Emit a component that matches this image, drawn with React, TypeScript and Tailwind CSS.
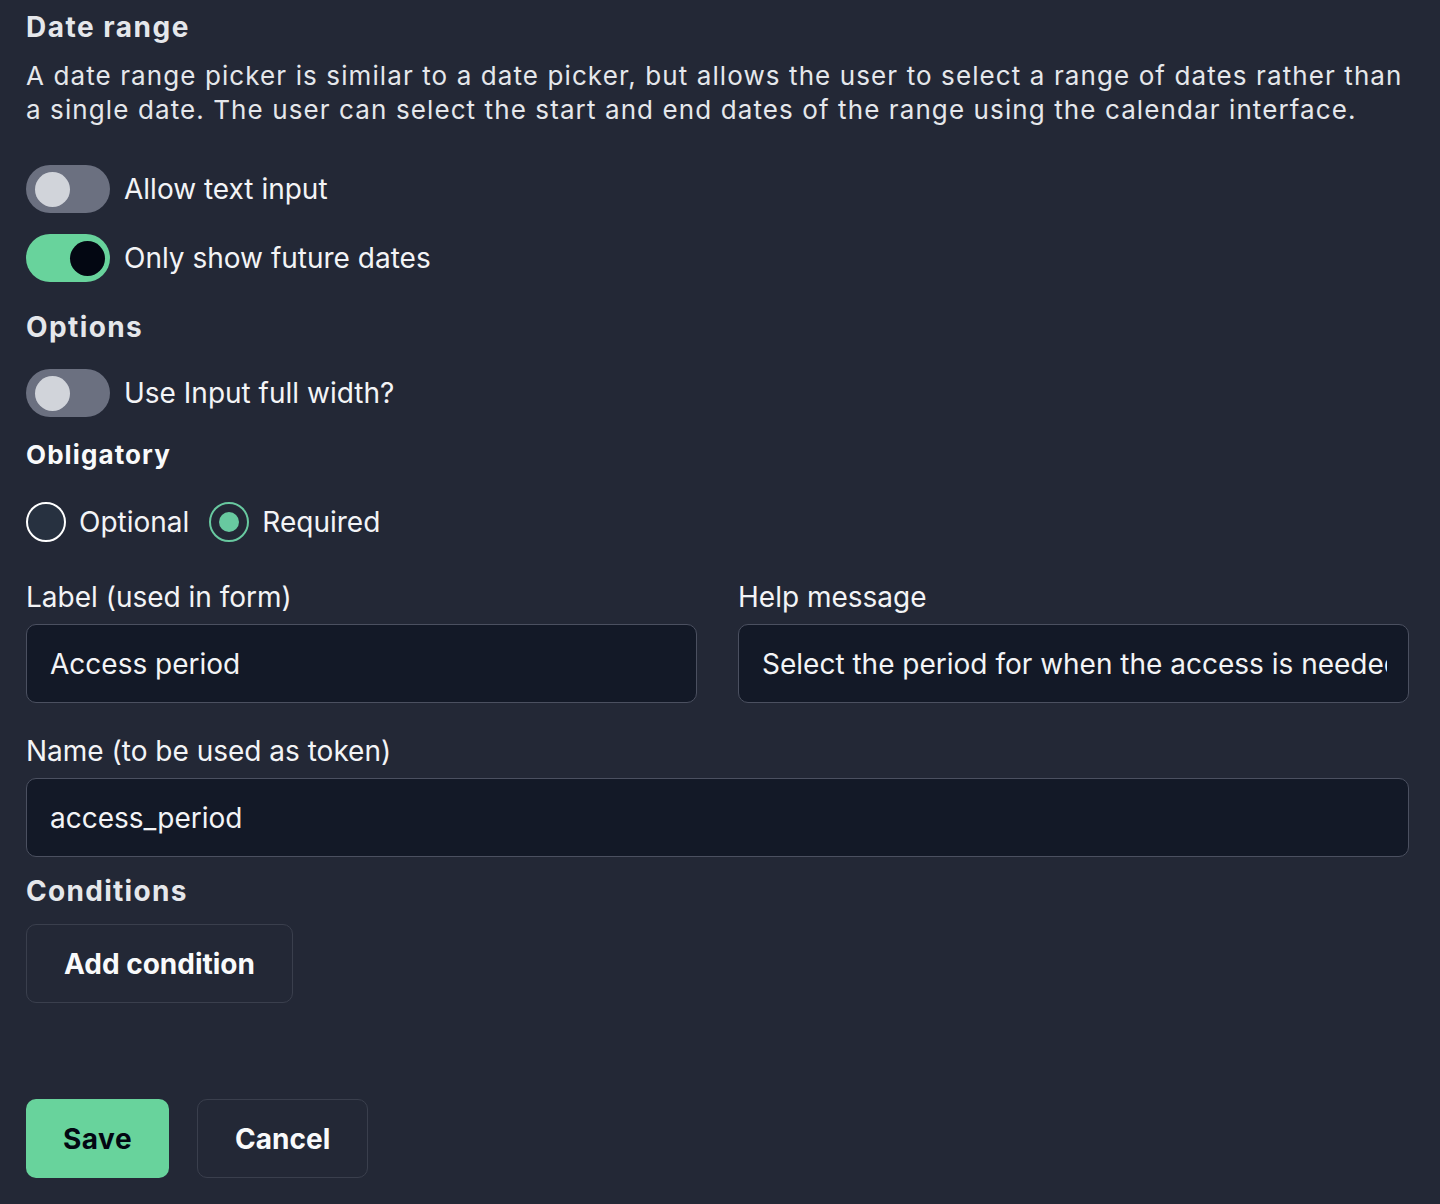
import { useState } from 'react'

function Toggle({ on, label }: { on: boolean; label: string }) {
  return (
    <label className="flex h-12 items-center gap-[14px]">
      <span className={`flex h-12 w-[84px] items-center rounded-full ${on ? 'bg-[#68d39c]' : 'bg-[#6b7080]'}`}>
        <span
          className={`h-[35px] w-[35px] rounded-full ${on ? 'ml-[44px] bg-[#030712]' : 'ml-[9px] bg-[#d1d4da]'}`}
        />
      </span>
      <span className="text-[28px] leading-9 text-[#f3f4f6]">{label}</span>
    </label>
  )
}

function Radio({ checked, label }: { checked: boolean; label: string }) {
  return (
    <label className="flex items-center gap-[13px]">
      <span
        className={`flex h-10 w-10 items-center justify-center rounded-full border-2 ${
          checked ? 'border-[#68c9a0] bg-[#232836]' : 'border-white bg-[#273140]'
        }`}
      >
        {checked && <span className="h-[20px] w-[20px] rounded-full bg-[#68c9a0]" />}
      </span>
      <span className="text-[28px] leading-9 text-[#f3f4f6]">{label}</span>
    </label>
  )
}

function Field({ label, value }: { label: string; value: string }) {
  return (
    <div className="flex flex-col gap-[9px]">
      <span className="text-[28px] leading-9 text-[#f3f4f6]">{label}</span>
      <input
        readOnly
        value={value}
        className="h-[79px] w-full rounded-[10px] border border-[#4b5060] bg-[#131927] pl-[23px] pr-[21px] text-[28px] text-[#f3f4f6] outline-none"
      />
    </div>
  )
}

export default function App() {
  const [required] = useState(true)

  return (
    <div className="min-h-[1204px] bg-[#232836] pl-[26px] pr-[31px] pt-[9px] pb-[26px] font-['Inter',sans-serif] antialiased">
      <h2 className="text-[28px] font-bold leading-9 tracking-[1.5px] text-[#e5e7eb]">Date range</h2>
      <p className="mt-[14px] text-[26px] leading-[34px] tracking-[1.1px] text-[#e5e7eb]">
        A date range picker is similar to a date picker, but allows the user to select a range of dates rather than
        a single date. The user can select the start and end dates of the range using the calendar interface.
      </p>

      <div className="mt-[38px] flex flex-col gap-[21px]">
        <Toggle on={false} label="Allow text input" />
        <Toggle on label="Only show future dates" />
      </div>

      <h3 className="mt-[27px] text-[28px] font-bold leading-9 tracking-[1.4px] text-[#e5e7eb]">Options</h3>
      <div className="mt-[24px]">
        <Toggle on={false} label="Use Input full width?" />
      </div>

      <h3 className="mt-[20px] text-[26px] font-bold leading-9 tracking-[1.1px] text-[#f9fafb]">Obligatory</h3>
      <div className="mt-[29px] flex items-center gap-[20px]">
        <Radio checked={!required} label="Optional" />
        <Radio checked={required} label="Required" />
      </div>

      <div className="mt-[37px] grid grid-cols-2 gap-x-[41px]">
        <Field label="Label (used in form)" value="Access period" />
        <Field label="Help message" value="Select the period for when the access is needed" />
      </div>

      <div className="mt-[30px]">
        <Field label="Name (to be used as token)" value="access_period" />
      </div>

      <h3 className="mt-[16px] text-[28px] font-bold leading-9 tracking-[1.3px] text-[#e5e7eb]">Conditions</h3>
      <button className="mt-[15px] flex h-[79px] items-center rounded-[10px] border border-[#3a3f4d] px-[37px] text-[28px] font-bold text-[#f9fafb]">
        Add condition
      </button>

      <div className="mt-[96px] flex gap-[28px]">
        <button className="flex h-[79px] items-center rounded-[10px] bg-[#68d39c] px-[37px] text-[28px] font-bold tracking-[0.5px] text-[#030712]">
          Save
        </button>
        <button className="flex h-[79px] items-center rounded-[10px] border border-[#3a3f4d] px-[37px] text-[28px] font-bold text-[#f9fafb]">
          Cancel
        </button>
      </div>
    </div>
  )
}
